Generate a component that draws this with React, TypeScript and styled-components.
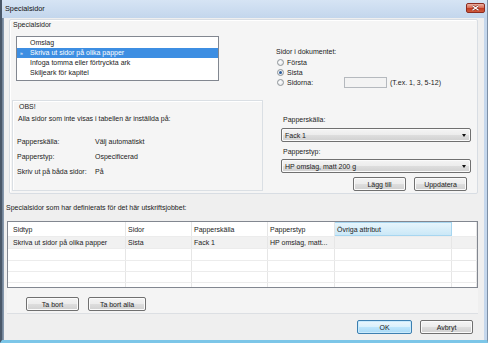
import React from "react";
import styled, { createGlobalStyle, css } from "styled-components";

const Global = createGlobalStyle`
  html, body { margin: 0; padding: 0; background: #ffffff; }
  body { font-family: "Liberation Sans", Arial, sans-serif; font-size: 7px; color: #1b1b1b; }
  * { box-sizing: border-box; }
`;

const Window = styled.div`
  width: 488px;
  height: 343px;
  display: flex;
  flex-direction: column;
  background: linear-gradient(90deg, #6b7b8e 0px, #9fb3c9 3px, #c5d7ec 6px);
  border-left: 2px solid #4a5869;
  border-right: 1px solid #7d8fa5;
  border-bottom: 3px solid #7cc6e8;
`;

const TitleBar = styled.div`
  height: 18px;
  flex: none;
  display: flex;
  justify-content: space-between;
  align-items: flex-start;
  padding: 3px 2px 0 3px;
  background: linear-gradient(#d6e4f4, #c3d6ec);
`;

const TitleText = styled.div`
  font-size: 7.3px;
  line-height: 10px;
  margin-top: 1px;
  color: #111;
`;

const CloseButton = styled.div`
  width: 19px;
  height: 10px;
  border: 1px solid #8c2c20;
  border-radius: 2px;
  background: linear-gradient(#eab0a2 0%, #d9705a 45%, #c23c22 55%, #cf5a3d 100%);
  display: flex;
  align-items: center;
  justify-content: center;
`;

const Frame = styled.div`
  flex: 1;
  display: flex;
  padding: 0 3px 0 2px;
`;

const Body = styled.div`
  flex: 1;
  display: flex;
  flex-direction: column;
  background: #efefef;
`;

const GroupPanel = styled.div`
  margin: 1px 6px 0 5px;
  height: 175px;
  border: 1px solid #d8dde3;
  border-radius: 2px;
  background: #f5f5f5;
  box-shadow: inset 1px 1px 0 #ffffff;
  display: flex;
  flex-direction: column;
`;

const Line = styled.div<{ $mt?: number; $ml?: number }>`
  height: 10px;
  line-height: 10px;
  white-space: nowrap;
  margin-top: ${(p) => p.$mt ?? 0}px;
  margin-left: ${(p) => p.$ml ?? 0}px;
`;

const TopRow = styled.div`
  display: flex;
  height: 70px;
`;

const ListBox = styled.div`
  margin: 6px 0 0 6px;
  width: 203px;
  height: 45px;
  border: 1px solid #828790;
  background: #ffffff;
  padding-top: 1px;
`;

const ListItem = styled.div<{ $selected?: boolean }>`
  height: 10px;
  line-height: 10px;
  padding-left: 13px;
  position: relative;
  white-space: nowrap;
  ${(p) =>
    p.$selected &&
    css`
      background: #3d8ee2;
      color: #ffffff;
    `}
`;

const Marker = styled.span`
  position: absolute;
  left: 3px;
  top: 0;
  font-size: 5px;
`;

const RadioSection = styled.div`
  margin: 17px 0 0 57px;
  display: flex;
  flex-direction: column;
`;

const RadioRow = styled.div<{ $h?: number }>`
  display: flex;
  align-items: center;
  height: ${(p) => p.$h ?? 10}px;
  padding-left: 1px;
  white-space: nowrap;
`;

const Radio = styled.span<{ $checked?: boolean }>`
  width: 7px;
  height: 7px;
  border-radius: 50%;
  border: 1px solid #8f9498;
  background: radial-gradient(circle at 40% 40%, #ffffff, #d9dde2);
  display: flex;
  align-items: center;
  justify-content: center;
  margin-right: 3px;
  flex: none;
  &::after {
    content: "";
    width: 3px;
    height: 3px;
    border-radius: 50%;
    background: ${(p) => (p.$checked ? "#2a5c9b" : "transparent")};
  }
`;

const RadioLabel = styled.span<{ $w?: number }>`
  ${(p) => p.$w && css`width: ${p.$w}px;`}
`;

const TextBox = styled.div`
  width: 43px;
  height: 11px;
  border: 1px solid #b5b9be;
  background: #f3f3f3;
  margin-right: 3px;
`;

const BottomRow = styled.div`
  display: flex;
  height: 93px;
`;

const ObsBox = styled.div`
  margin-left: 2px;
  width: 251px;
  height: 91px;
  border: 1px solid #dadfe4;
  box-shadow: inset 1px 1px 0 #ffffff;
  padding: 1px 0 0 4px;
  display: flex;
  flex-direction: column;
`;

const SettingsGrid = styled.div`
  margin-top: 13px;
  display: grid;
  grid-template-columns: 78px auto;
  grid-auto-rows: 10px;
  row-gap: 5px;
  line-height: 10px;
  white-space: nowrap;
`;

const RightForm = styled.div`
  margin-left: 18px;
  width: 190px;
  display: flex;
  flex-direction: column;
`;

const FieldLabel = styled.div<{ $mt: number }>`
  height: 10px;
  line-height: 10px;
  padding-left: 2px;
  margin-top: ${(p) => p.$mt}px;
`;

const buttonLook = css`
  border: 1px solid #707070;
  border-radius: 2px;
  background: linear-gradient(#f4f4f4 0%, #ececec 50%, #dedede 50%, #d0d0d0 100%);
  box-shadow: inset 0 0 0 1px #fbfbfb;
`;

const Select = styled.div<{ $mt: number }>`
  ${buttonLook};
  height: 14px;
  margin-top: ${(p) => p.$mt}px;
  display: flex;
  align-items: center;
  justify-content: space-between;
  padding: 0 4px 0 3px;
`;

const Arrow = styled.span`
  width: 0;
  height: 0;
  border-left: 2.5px solid transparent;
  border-right: 2.5px solid transparent;
  border-top: 3px solid #111;
`;

const ButtonRow = styled.div<{ $mt: number; $ml?: number; $end?: boolean; $gap: number; $pr?: number }>`
  display: flex;
  justify-content: ${(p) => (p.$end ? "flex-end" : "flex-start")};
  gap: ${(p) => p.$gap}px;
  margin-top: ${(p) => p.$mt}px;
  margin-left: ${(p) => p.$ml ?? 0}px;
  padding-right: ${(p) => p.$pr ?? 0}px;
`;

const Button = styled.div<{ $w: number; $default?: boolean }>`
  ${buttonLook};
  width: ${(p) => p.$w}px;
  height: 14px;
  display: flex;
  align-items: center;
  justify-content: center;
  white-space: nowrap;
  ${(p) =>
    p.$default &&
    css`
      border-color: #3c7fb1;
      background: linear-gradient(#eaf6fd 0%, #d9f0fc 50%, #bee6fd 50%, #a7d9f5 100%);
      box-shadow: inset 0 0 0 1px #c9eafc;
    `}
`;

const Caption = styled.div`
  margin: 9px 0 0 2px;
  height: 10px;
  line-height: 10px;
`;

const TablePanel = styled.div`
  margin: 8px 6px 0 3px;
  height: 93px;
  display: flex;
  flex-direction: column;
  background: #f4f4f4;
  border-bottom: 1px solid #dcdfe3;
`;

const Table = styled.div`
  height: 67px;
  border: 1px solid #828790;
  background: #ffffff;
  display: flex;
  flex-direction: column;
  overflow: hidden;
`;

const COLS = "118px 66px 76px 67px 117px 1fr";

const Row = styled.div<{ $h: number; $bg?: string }>`
  display: grid;
  grid-template-columns: ${COLS};
  height: ${(p) => p.$h}px;
  flex: none;
  background: ${(p) => p.$bg ?? "transparent"};
  border-bottom: 1px solid #ececec;
`;

const Cell = styled.div<{ $first?: boolean; $hot?: boolean }>`
  border-right: 1px solid #e6e6e6;
  padding-left: ${(p) => (p.$first ? 5 : 2)}px;
  display: flex;
  align-items: center;
  white-space: nowrap;
  overflow: hidden;
  ${(p) =>
    p.$hot &&
    css`
      background: linear-gradient(#e6f5fc, #cbe8f7);
      border: 1px solid #a7d6f0;
      border-left: none;
    `}
`;

const Footer = styled.div`
  display: flex;
  justify-content: flex-end;
  gap: 8px;
  margin-top: 6px;
  padding-right: 11px;
`;

const headers = ["Sidtyp", "Sidor", "Papperskälla", "Papperstyp", "Övriga attribut", ""];
const dataRow = ["Skriva ut sidor på olika papper", "Sista", "Fack 1", "HP omslag, matt...", "", ""];

export default function App() {
  return (
    <>
      <Global />
      <Window>
        <TitleBar>
          <TitleText>Specialsidor</TitleText>
          <CloseButton>
            <svg width="9" height="6" viewBox="0 0 9 6">
              <path d="M1.5 0.8 L7.5 5.2 M7.5 0.8 L1.5 5.2" stroke="#7a2216" strokeWidth="2.4" />
              <path d="M1.5 0.8 L7.5 5.2 M7.5 0.8 L1.5 5.2" stroke="#ffffff" strokeWidth="1.3" />
            </svg>
          </CloseButton>
        </TitleBar>
        <Frame>
          <Body>
            <GroupPanel>
              <Line $ml={3}>Specialsidor</Line>
              <TopRow>
                <ListBox>
                  <ListItem>Omslag</ListItem>
                  <ListItem $selected>
                    <Marker>»</Marker>Skriva ut sidor på olika papper
                  </ListItem>
                  <ListItem>Infoga tomma eller förtryckta ark</ListItem>
                  <ListItem>Skiljeark för kapitel</ListItem>
                </ListBox>
                <RadioSection>
                  <Line>Sidor i dokumentet:</Line>
                  <RadioRow>
                    <Radio />
                    <RadioLabel>Första</RadioLabel>
                  </RadioRow>
                  <RadioRow>
                    <Radio $checked />
                    <RadioLabel>Sista</RadioLabel>
                  </RadioRow>
                  <RadioRow $h={11}>
                    <Radio />
                    <RadioLabel $w={57}>Sidorna:</RadioLabel>
                    <TextBox />
                    <span>(T.ex. 1, 3, 5-12)</span>
                  </RadioRow>
                </RadioSection>
              </TopRow>
              <BottomRow>
                <ObsBox>
                  <Line $ml={2}>OBS!</Line>
                  <Line $mt={2} $ml={1}>Alla sidor som inte visas i tabellen är inställda på:</Line>
                  <SettingsGrid>
                    <span>Papperskälla:</span>
                    <span>Välj automatiskt</span>
                    <span>Papperstyp:</span>
                    <span>Ospecificerad</span>
                    <span>Skriv ut på båda sidor:</span>
                    <span>På</span>
                  </SettingsGrid>
                </ObsBox>
                <RightForm>
                  <FieldLabel $mt={15}>Papperskälla:</FieldLabel>
                  <Select $mt={3}>
                    <span>Fack 1</span>
                    <Arrow />
                  </Select>
                  <FieldLabel $mt={5}>Papperstyp:</FieldLabel>
                  <Select $mt={2}>
                    <span>HP omslag, matt 200 g</span>
                    <Arrow />
                  </Select>
                  <ButtonRow $mt={4} $end $gap={8} $pr={4}>
                    <Button $w={53}>Lägg till</Button>
                    <Button $w={53}>Uppdatera</Button>
                  </ButtonRow>
                </RightForm>
              </BottomRow>
            </GroupPanel>

            <Caption>Specialsidor som har definierats för det här utskriftsjobbet:</Caption>

            <TablePanel>
              <Table>
                <Row $h={15}>
                  {headers.map((h, i) => (
                    <Cell key={i} $first={i === 0} $hot={i === 4}>
                      {h}
                    </Cell>
                  ))}
                </Row>
                <Row $h={12} $bg="#f1f1f1">
                  {dataRow.map((d, i) => (
                    <Cell key={i} $first={i === 0}>
                      {d}
                    </Cell>
                  ))}
                </Row>
                {[12, 11, 11, 11].map((h, r) => (
                  <Row key={r} $h={h}>
                    {headers.map((_, i) => (
                      <Cell key={i} />
                    ))}
                  </Row>
                ))}
              </Table>
              <ButtonRow $mt={9} $ml={19} $gap={9}>
                <Button $w={53}>Ta bort</Button>
                <Button $w={58}>Ta bort alla</Button>
              </ButtonRow>
            </TablePanel>

            <Footer>
              <Button $w={55} $default>OK</Button>
              <Button $w={53}>Avbryt</Button>
            </Footer>
          </Body>
        </Frame>
      </Window>
    </>
  );
}
